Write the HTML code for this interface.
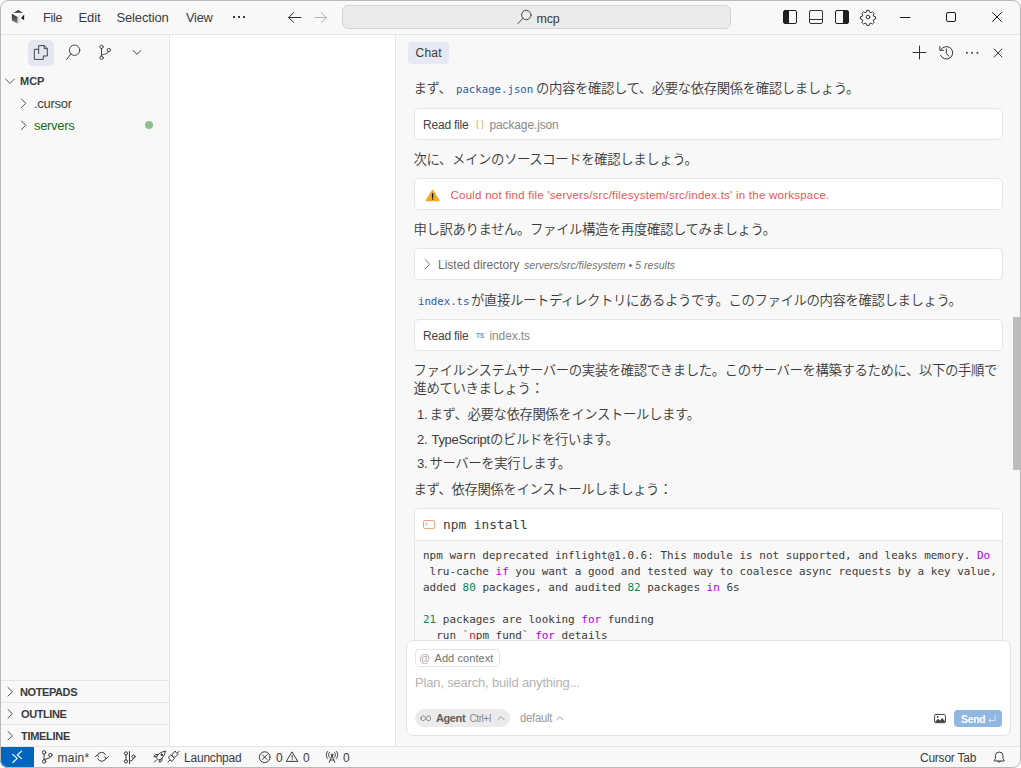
<!DOCTYPE html>
<html lang="ja">
<head>
<meta charset="utf-8">
<title>mcp - Cursor</title>
<style>
*{box-sizing:border-box;margin:0;padding:0}
html,body{width:1021px;height:768px;overflow:hidden;background:#fff}
body{font-family:"Liberation Sans","Noto Sans CJK JP",sans-serif;font-size:13px;color:#3b3b3b;position:relative}
#win{position:absolute;left:0;top:0;width:1021px;height:768px;background:#f8f8f8;overflow:hidden}
#frame{position:absolute;left:0;top:0;width:1021px;height:768px;border:1px solid #b9b9b9;border-radius:8px;box-shadow:0 0 0 12px #fff;z-index:50;pointer-events:none}
.a{position:absolute}
svg{position:absolute;overflow:visible}
.t{position:absolute;white-space:pre;line-height:20px;height:20px}
.hl{position:absolute;height:1px;background:#e5e5e5}
.vl{position:absolute;width:1px;background:#e5e5e5}
.jp{position:absolute;white-space:pre;font-size:13.4px;letter-spacing:-.4px;font-weight:350;line-height:20px;height:20px;color:#3b3b3b;left:413.5px}
.num{font-size:13px;letter-spacing:0}
.box{position:absolute;left:414px;width:589px;height:32px;background:#fff;border:1px solid #e3e5e9;border-radius:5px}
code,.mono{font-family:"DejaVu Sans Mono","Liberation Mono",monospace}
.ic{color:#2b5cab;font-size:10.7px}
.k{color:#af00db}.n{color:#098658}.r{color:#e0203a}
</style>
</head>
<body>
<div id="win">
 <!-- editor (white) -->
 <div class="a" style="left:170px;top:35px;width:225px;height:711px;background:#fff"></div>
 <!-- separators -->
 <div class="hl" style="left:0;top:34px;width:1021px"></div>
 <div class="vl" style="left:169px;top:35px;height:711px"></div>
 <div class="vl" style="left:395px;top:35px;height:711px"></div>
 <div class="hl" style="left:0;top:746px;width:1021px"></div>
 <div class="hl" style="left:0;top:680px;width:169px"></div>
 <div class="hl" style="left:0;top:702px;width:169px"></div>
 <div class="hl" style="left:0;top:724px;width:169px"></div>

 <!-- TITLE BAR -->
 <span class="t" style="left:43px;top:8px;font-size:13px;color:#3b3b3b;letter-spacing:-0.25px;transform:scaleX(0.968);transform-origin:0 50%">File</span><span class="t" style="left:78.5px;top:8px;font-size:13px;color:#3b3b3b;letter-spacing:-0.13px">Edit</span><span class="t" style="left:116.5px;top:8px;font-size:13px;color:#3b3b3b;letter-spacing:-0.15px">Selection</span><span class="t" style="left:185.5px;top:8px;font-size:13px;color:#3b3b3b;letter-spacing:-0.25px;transform:scaleX(0.985);transform-origin:0 50%">View</span>
 <div class="a" style="left:342px;top:5px;width:389px;height:24px;background:#ebebeb;border:1px solid #d3d3d3;border-radius:6px"></div>
 <span class="t" style="left:536.5px;top:9px;font-size:12.5px;color:#3b3b3b;letter-spacing:-0.20px">mcp</span>
 <!--ICONS_TITLE-->

 <!-- SIDEBAR -->
 <div class="a" style="left:28px;top:40px;width:26px;height:26px;border-radius:5px;background:#e4e6f1"></div>
 <span class="t" style="left:20px;top:71px;font-size:11px;font-weight:bold;color:#3b3b3b;letter-spacing:0.00px">MCP</span><span class="t" style="left:34px;top:94px;font-size:13px;color:#3b3b3b;letter-spacing:-0.27px">.cursor</span><span class="t" style="left:34px;top:116px;font-size:13px;color:#16701c;letter-spacing:-0.32px">servers</span>
 <div class="a" style="left:145px;top:121px;width:8px;height:8px;border-radius:50%;background:#8fc08f"></div>
 <span class="t" style="left:20px;top:682px;font-size:11px;font-weight:bold;color:#3b3b3b;letter-spacing:-0.40px">NOTEPADS</span><span class="t" style="left:21px;top:704px;font-size:11px;font-weight:bold;color:#3b3b3b;letter-spacing:-0.40px">OUTLINE</span><span class="t" style="left:21px;top:726px;font-size:11px;font-weight:bold;color:#3b3b3b;letter-spacing:-0.30px">TIMELINE</span>
 <!--ICONS_SIDE-->

 <!-- CHAT -->
 <div class="a" style="left:408px;top:42px;width:41px;height:22px;border-radius:4px;background:#e6e8f3"></div>
 <span class="t" style="left:415.5px;top:43px;font-size:12px;color:#3b3b3b;letter-spacing:0.23px">Chat</span>
 <!--ICONS_CHAT-->

 <span class="jp" style="top:79px">まず、</span><code class="t ic" style="left:456px;top:80px">package.json</code><span class="jp" style="top:79px;left:536px">の内容を確認して、必要な依存関係を確認しましょう。</span>
 <div class="box" style="top:108px"></div>
 <span class="t" style="left:423px;top:115px;font-size:12px;color:#444;letter-spacing:-0.21px">Read file</span><span class="t" style="left:476px;top:114px;font-size:8.5px;color:#c9aa2e;letter-spacing:2.20px">{}</span><span class="t" style="left:489.5px;top:115px;font-size:12px;color:#8a8a8a;letter-spacing:-0.13px">package.json</span>
 <span class="jp" style="top:150px">次に、メインのソースコードを確認しましょう。</span>
 <div class="box" style="top:178px"></div>
 <span class="t" style="left:450.5px;top:185px;font-size:11.5px;color:#ec5555;letter-spacing:0.24px">Could not find file &#x27;servers/src/filesystem/src/index.ts&#x27; in the workspace.</span>
 <span class="jp" style="top:220px">申し訳ありません。ファイル構造を再度確認してみましょう。</span>
 <div class="box" style="top:248px"></div>
 <span class="t" style="left:438px;top:255px;font-size:12px;color:#6a6a6a;letter-spacing:-0.01px">Listed directory</span><span class="t" style="left:524px;top:255px;font-size:10.5px;font-style:italic;color:#707070;letter-spacing:0.03px">servers/src/filesystem • 5 results</span>
 <code class="t ic" style="left:418px;top:292px">index.ts</code><span class="jp" style="top:291px;left:471px">が直接ルートディレクトリにあるようです。このファイルの内容を確認しましょう。</span>
 <div class="box" style="top:319px"></div>
 <span class="t" style="left:423px;top:326px;font-size:12px;color:#444;letter-spacing:-0.21px">Read file</span><span class="t" style="left:475.5px;top:326px;font-size:8px;font-weight:bold;color:#5f9bd3;letter-spacing:-0.25px;transform:scaleX(0.820);transform-origin:0 50%">TS</span><span class="t" style="left:489.5px;top:326px;font-size:12px;color:#8a8a8a;letter-spacing:-0.11px">index.ts</span>
 <span class="jp" style="top:361px">ファイルシステムサーバーの実装を確認できました。このサーバーを構築するために、以下の手順で</span>
 <span class="jp" style="top:379px">進めていきましょう：</span>
 <span class="jp num" style="top:405px;left:416.9px">1.</span><span class="jp" style="top:405px;left:429.4px">まず、必要な依存関係をインストールします。</span>
 <span class="jp num" style="top:430px;left:416.9px">2.</span><span class="t" style="left:431.5px;top:430px;font-size:13px;color:#3b3b3b;letter-spacing:-0.31px">TypeScript</span><span class="jp" style="top:430px;left:490px">のビルドを行います。</span>
 <span class="jp num" style="top:454px;left:416.9px">3.</span><span class="jp" style="top:454px;left:429.4px">サーバーを実行します。</span>
 <span class="jp" style="top:480px">まず、依存関係をインストールしましょう：</span>

 <!-- code block -->
 <div class="a" style="left:414px;top:508px;width:589px;height:180px;background:#fff;border:1px solid #e3e5e9;border-radius:5px"></div>
 <div class="a" style="left:415px;top:540px;width:587px;height:140px;background:#f8f8f8;border-top:1px solid #e3e5e9"></div>
 <span class="t mono" style="left:443px;top:515px;font-size:12.8px;color:#3b3b3b">npm install</span>
 <pre class="a mono" style="left:423px;top:548px;font-size:10.96px;line-height:16px;color:#3b3b3b">npm warn deprecated inflight@1.0.6: This module is not supported, and leaks memory. <span class="k">Do</span>
 lru-cache <span class="k">if</span> you want a good and tested way to coalesce async requests by a key value,
added <span class="n">80</span> packages, and audited <span class="n">82</span> packages <span class="k">in</span> 6s

<span class="n">21</span> packages are looking <span class="k">for</span> funding
  run <span class="r">`n</span>pm fund` <span class="k">for</span> details</pre>

 <!-- scrollbar thumb -->
 <div class="a" style="left:1013px;top:317px;width:7px;height:153px;background:#bdbdbd"></div>

 <!-- input box -->
 <div class="a" style="left:396px;top:641px;width:624px;height:105px;background:#f8f8f8"></div>
 <div class="a" style="left:406px;top:640px;width:605px;height:96px;background:#fff;border:1px solid #e2e2e2;border-radius:7px"></div>
 <div class="a" style="left:415px;top:649px;width:85px;height:18px;border:1px solid #e4e4e4;border-radius:4px;background:#fff"></div>
 <span class="t" style="left:419px;top:648px;font-size:11px;color:#aaa;letter-spacing:0.00px">@</span><span class="t" style="left:434.5px;top:648px;font-size:11px;color:#707070;letter-spacing:0.08px">Add context</span><span class="t" style="left:415px;top:673px;font-size:13px;color:#b4b4b4;letter-spacing:-0.18px">Plan, search, build anything...</span>
 <div class="a" style="left:415px;top:709px;width:95px;height:18px;border-radius:9px;background:#ebebeb"></div>
 <span class="t" style="left:436px;top:708px;font-size:11px;font-weight:bold;color:#606060;letter-spacing:-0.40px">Agent</span><span class="t" style="left:469.5px;top:709px;font-size:10px;color:#8a8a8a;letter-spacing:-0.42px">Ctrl+I</span><span class="t" style="left:519.5px;top:708px;font-size:12px;color:#9a9a9a;letter-spacing:-0.25px;transform:scaleX(0.934);transform-origin:0 50%">default</span>
 <div class="a" style="left:954px;top:710px;width:48px;height:17px;border-radius:4px;background:#90b7df"></div>
 <span class="t" style="left:960.5px;top:709px;font-size:10.5px;font-weight:bold;color:#fff;letter-spacing:-0.25px;transform:scaleX(0.983);transform-origin:0 50%">Send</span>
 <!--ICONS_INPUT-->

 <!-- STATUS BAR -->
 <div class="a" style="left:0;top:747px;width:34px;height:21px;background:#0065bd"></div>
 <span class="t" style="left:57.5px;top:748px;font-size:12px;color:#3b3b3b;letter-spacing:0.25px">main*</span><span class="t" style="left:184px;top:748px;font-size:12px;color:#3b3b3b;letter-spacing:-0.21px">Launchpad</span><span class="t" style="left:276px;top:748px;font-size:12px;color:#3b3b3b;letter-spacing:0.00px">0</span><span class="t" style="left:303px;top:748px;font-size:12px;color:#3b3b3b;letter-spacing:0.00px">0</span><span class="t" style="left:343px;top:748px;font-size:12px;color:#3b3b3b;letter-spacing:0.00px">0</span><span class="t" style="left:920px;top:748px;font-size:12px;color:#3b3b3b;letter-spacing:-0.24px">Cursor Tab</span>
 <!--ICONS_STATUS-->
<svg class="ico" width="1021" height="768" viewBox="0 0 1021 768" style="left:0;top:0" fill="none" stroke="#3b3b3b" stroke-width="1" stroke-linecap="round" stroke-linejoin="round">
 <defs>
  <linearGradient id="gl" x1="0" y1="0" x2="0" y2="1"><stop offset="0" stop-color="#2a2a2a"/><stop offset="1" stop-color="#8a8a8a"/></linearGradient>
  <linearGradient id="gt" x1="0" y1="0" x2="0" y2="1"><stop offset="0" stop-color="#111"/><stop offset="1" stop-color="#666"/></linearGradient>
 </defs>
 <!-- cursor logo -->
 <g stroke="none">
  <polygon points="18,10 24.3,13.6 24.3,20.5 18,24 11.7,20.5 11.7,13.6" fill="#fdfdfd"/>
  <polygon points="18.2,9.900 23.200,13 13.100,13" fill="url(#gt)"/>
  <polygon points="11.8,13.8 17.7,17 17.7,23.8 11.8,20.4" fill="url(#gl)"/>
  <polygon points="24.200,14.400 24.100,20.200 21,17.900" fill="#1c1c1c"/>
  <polygon points="17.7,17 20.2,15.6 20.2,22.4 17.7,23.8" fill="#ddd"/>
 </g>
 <!-- menu dots -->
 <g stroke="none" fill="#3b3b3b"><rect x="233" y="16" width="2" height="2"/><rect x="238" y="16" width="2" height="2"/><rect x="243" y="16" width="2" height="2"/></g>
 <!-- nav arrows -->
 <path d="M300.800 17.5H288.600M293.600 12.700L288.700 17.5L293.600 22.300" stroke="#2b2b2b"/>
 <path d="M314.800 17.5H326.400M321.400 12.700L326.300 17.5L321.400 22.300" stroke="#b2b2b2"/>
 <!-- title search icon -->
 <circle cx="526.3" cy="15" r="4.7" stroke="#4a4a4a"/><path d="M522.8 18.5L517.9 23.6" stroke="#4a4a4a"/>
 <!-- layout icons -->
 <rect x="783.5" y="10.5" width="13" height="13" rx="1.5" stroke="#1f1f1f"/><path d="M784 11h5v12h-5z" fill="#1f1f1f" stroke="none"/>
 <rect x="809.5" y="10.5" width="13" height="13" rx="1.5" stroke="#333"/><path d="M810 19.5h12" stroke="#333"/>
 <rect x="835.5" y="10.5" width="13" height="13" rx="1.5" stroke="#1f1f1f"/><path d="M843 11h5v12h-5z" fill="#1f1f1f" stroke="none"/>
 <!-- gear -->
 <g transform="translate(868 17) scale(.88)" stroke="#333" stroke-width="1.1">
  <circle r="2.1"/>
  <path d="M-1.3 -7.6h2.6l.5 2.1 1.5.6 1.9-1.1 1.8 1.8-1.1 1.9.6 1.5 2.1.5v2.6l-2.1.5-.6 1.5 1.1 1.9-1.8 1.8-1.9-1.1-1.5.6-.5 2.1h-2.6l-.5-2.1-1.5-.6-1.9 1.1-1.8-1.8 1.1-1.9-.6-1.5-2.1-.5v-2.6l2.1-.5.6-1.5-1.1-1.9 1.8-1.8 1.9 1.1 1.5-.6z"/>
 </g>
 <!-- window controls -->
 <path d="M900.5 17.5H910" stroke="#1a1a1a"/>
 <rect x="946.5" y="12.5" width="9" height="9" rx="1.5" stroke="#1a1a1a"/>
 <path d="M992.5 12.5L1001.5 21.5M1001.5 12.5L992.5 21.5" stroke="#1a1a1a"/>

 <!-- activity icons -->
 <g stroke="#454545" stroke-width="1">
  <path d="M38.7 53.5V45.6H44.4L47.3 48.5V56H43.5M44.2 45.8V48.7H47.2"/>
  <path d="M38.5 49.3H34.3V59.4H43.3V56.2"/>
  <circle cx="74.6" cy="50.2" r="5.2"/><path d="M70.8 54L66.6 59.6"/>
  <circle cx="101.5" cy="46.9" r="1.7"/><circle cx="101.5" cy="57.7" r="1.7"/><circle cx="108.8" cy="50" r="1.7"/>
  <path d="M101.5 48.7V56M108.5 51.8C108 54 104 54 101.8 55"/>
  <path d="M133.1 50.5L137 54.3L140.900 50.5"/>
 </g>
 <!-- tree chevrons -->
 <g stroke="#505050">
 <path d="M5.6 79L10 83.4L14.4 79"/>
 <path d="M21.5 99L25.7 103.3L21.5 107.6"/>
 <path d="M21.5 121L25.7 125.3L21.5 129.6"/>
 <path d="M8 687.5L12.4 691.8L8 696.1"/>
 <path d="M8 709.5L12.4 713.8L8 718.1"/>
 <path d="M8 731.5L12.4 735.8L8 740.1"/>
 </g>

 <!-- chat header icons -->
 <path d="M913 52.5H926M919.5 46V59" stroke="#333"/>
 <path d="M941.2 49.2A6.3 6.3 0 1 1 940.6 55.4" stroke="#333"/><path d="M939.8 46.6V50.3H943.5" stroke="#333"/><path d="M946.3 49V53.6L949 56.2" stroke="#333"/>
 <g stroke="none" fill="#3b3b3b"><rect x="966" y="52" width="1.7" height="1.7"/><rect x="971.3" y="52" width="1.7" height="1.7"/><rect x="976.6" y="52" width="1.7" height="1.7"/></g>
 <path d="M994.2 49L1002 57M1002 49L994.2 57" stroke="#333"/>

 <!-- warning icon -->
 <path d="M432.6 190.3L439 200.6H426.2Z" fill="#f5a623" stroke="#f5a623" stroke-width="1.2"/>
 <path d="M432.6 193.6V197.3M432.6 199V199.2" stroke="#1a1a1a" stroke-width="1.3"/>
 <!-- listed chevron -->
 <path d="M425 259.5L429.8 264.2L425 269" stroke="#7a7a7a"/>
 <!-- terminal icon -->
 <rect x="423.5" y="520.5" width="11" height="8" rx="1.3" stroke="#f0a27a"/><path d="M425.8 522.8L427.2 523.9L425.8 525" stroke="#f0a27a" stroke-width=".9"/>
 <!-- input icons -->
 <path d="M497.8 719.8L501 716.6L504.2 719.8" stroke="#9a9a9a"/>
 <path d="M556.6 719.8L559.8 716.6L563 719.8" stroke="#9a9a9a"/>
 <path d="M421 718.3c0-3.2 3.4-3.2 4.8 0s4.8 3.2 4.8 0-3.4-3.2-4.8 0-4.800 3.200-4.800 0z" stroke="#777" stroke-width=".9"/>
 <rect x="934.6" y="714.5" width="10.8" height="8.2" rx="1" stroke="#444"/><path d="M935 722l3-3.200 2 1.800 2.200-2.600 3 3.600v.8h-10.200z" fill="#444" stroke="none"/><circle cx="937.6" cy="717" r=".9" fill="#444" stroke="none"/>
 <path d="M995 715.5V720.5H989.200M990.800 718.600L988.800 720.500L990.800 722.400" stroke="#dfeaf6" stroke-width=".9"/>

 <!-- status icons -->
 <path d="M12.600 754.300L17.200 758.400L12.800 762.500M21.600 751.200L17.300 755L21.600 758.700" stroke="#fff" stroke-width="1.100"/>
 <circle cx="44.100" cy="752.400" r="1.700"/><circle cx="44.100" cy="761.500" r="1.700"/><circle cx="50.400" cy="755" r="1.700"/>
 <path d="M44.100 754.200V759.700M50.300 756.800C50 758.600 46.500 758.600 44.400 759.600"/>
 <path d="M97.300 755.600A4.500 4.500 0 0 1 105.700 754.900M106.100 758A4.500 4.500 0 0 1 97.700 758.700"/><path d="M95.200 756.900L97 755.100L98.900 756.700M108.300 756.700L106.400 758.500L104.600 756.900"/>
 <circle cx="126" cy="753.400" r="1.600"/><circle cx="126" cy="761.400" r="1.600"/><circle cx="133.500" cy="756.600" r="1.600"/>
 <path d="M126 755.100V759.700M129.500 751.600V763.600M133.400 758.300C133.200 760.300 131.500 760.600 129.700 761.200"/>
 <path d="M165.300 751.300C161 751.500 157.800 754 156.200 757.600L158.800 760.300C162.400 758.600 165 755.600 165.300 751.300ZM156.800 756.400L153.900 756.800L155.600 754.600L158 754.400M160 759.500L159.700 762.400L161.900 760.700L162 758.400M156.500 759.900L154.400 762"/><circle cx="161.700" cy="754.900" r=".8" fill="#3b3b3b"/>
 <path d="M176.300 752.600L178 754.300L175.800 756.500C174.900 757.400 173.500 757.400 172.700 756.600C171.900 755.800 171.900 754.400 172.800 753.500L175 751.300ZM177.200 753.300L179.200 751.300M171.100 760.700L169.400 759C168.500 758.100 168.500 756.900 169.400 756L170.900 754.800L174.400 758.300L173.200 759.800C172.300 760.700 171.900 761.500 171.100 760.700ZM169.800 760.300L168 762"/>
 <circle cx="264.700" cy="757.200" r="5.400"/><path d="M262.400 754.900L267 759.500M267 754.900L262.400 759.500"/>
 <path d="M292.200 752.200L297.800 761.400H286.600Z"/><path d="M292.200 755.300V758.300M292.200 759.700V759.900"/>
 <path d="M329.200 762.400L332 755.600L334.800 762.400M330.300 760H333.700"/><circle cx="332" cy="754.900" r=".9"/><path d="M329.600 752.300A3.400 3.400 0 0 0 329.600 757.500M334.400 752.300A3.400 3.400 0 0 1 334.400 757.500M327.700 751.300A5.600 5.600 0 0 0 327.700 758.600M336.300 751.300A5.600 5.600 0 0 1 336.300 758.600" stroke-width=".9"/>
 <path d="M994.300 760.600V760.100L995.400 758.600V755.800A3.800 3.800 0 0 1 1003 755.800V758.600L1004.100 760.100V760.600ZM997.800 761.200A1.500 1.500 0 0 0 1000.600 761.200"/>
</svg>

</div>
<div id="frame"></div>
</body>
</html>
